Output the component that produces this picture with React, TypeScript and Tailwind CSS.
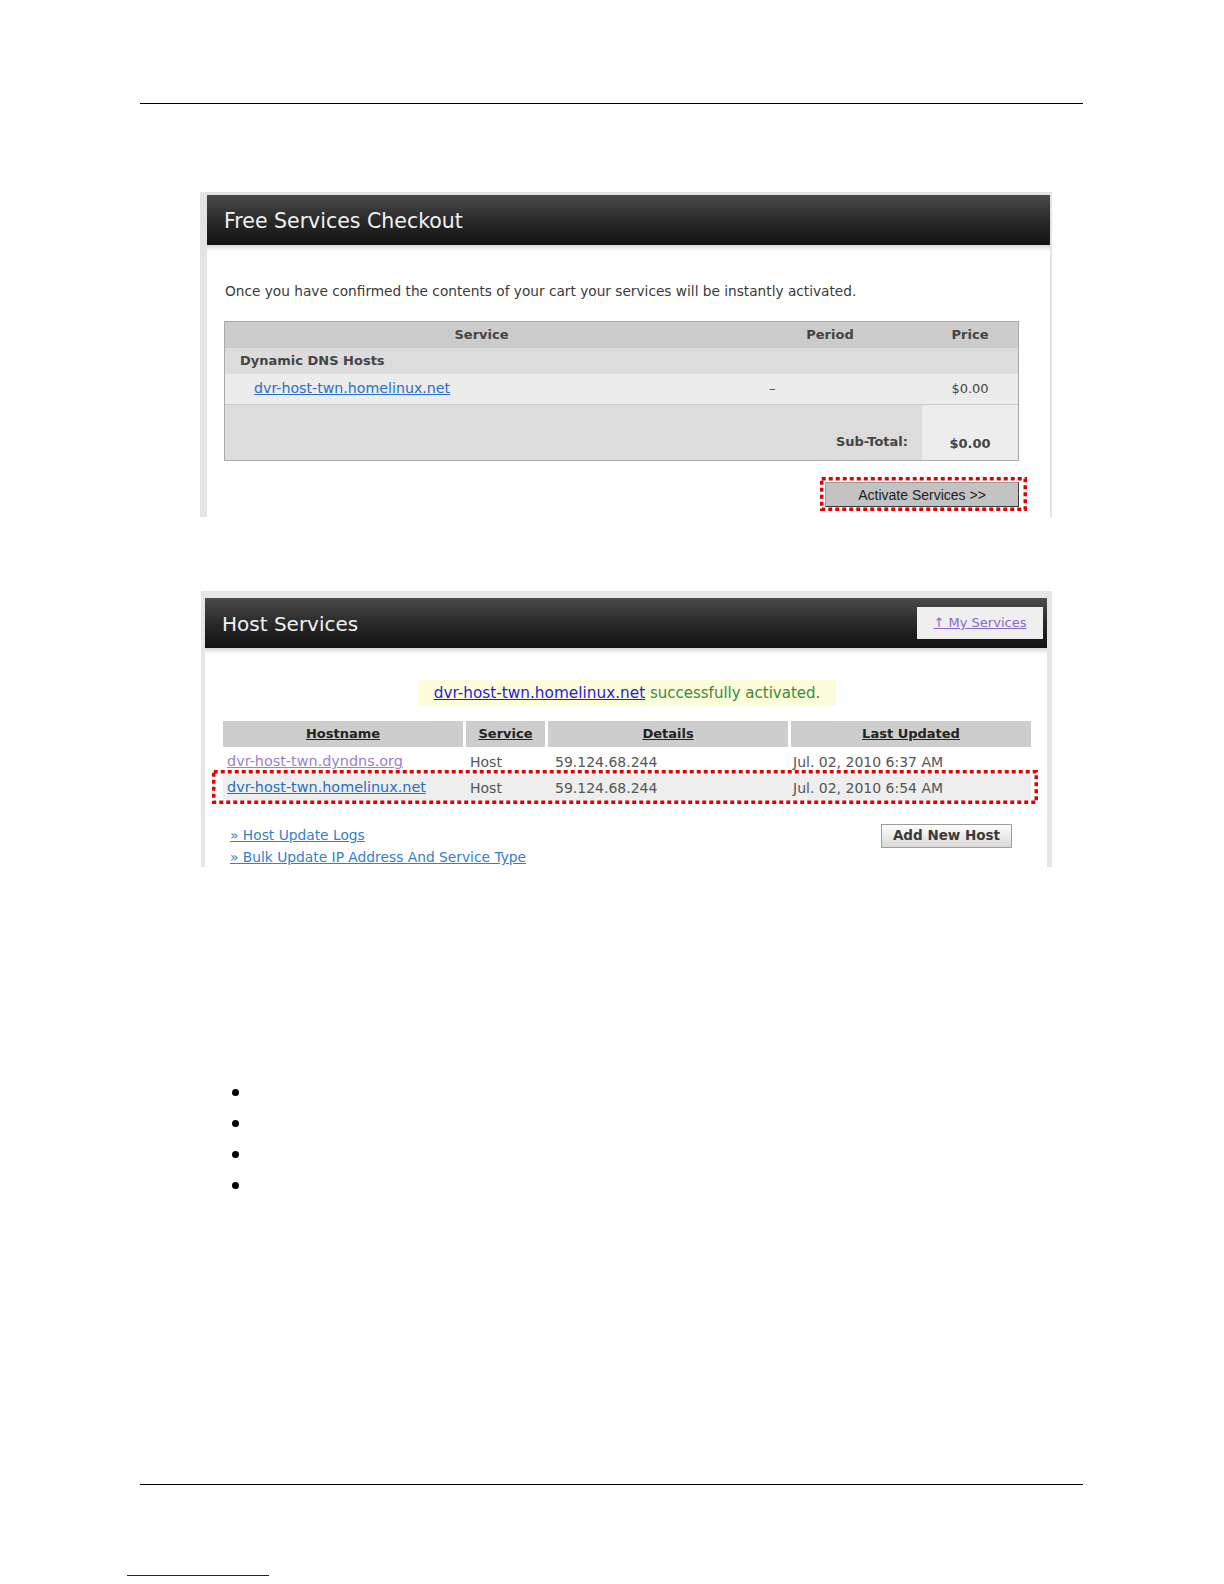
import React from 'react';

// red dotted highlight drawn over a control / row
function Dots({ w, h, className }: { w: number; h: number; className: string }) {
  return (
    <svg
      width={w}
      height={h}
      className={`absolute pointer-events-none ${className}`}
      viewBox={`0 0 ${w} ${h}`}
    >
      <rect
        x={1.75}
        y={1.75}
        width={w - 3.5}
        height={h - 3.5}
        fill="none"
        stroke="#e40000"
        strokeWidth={3.5}
        strokeDasharray="4 3"
      />
    </svg>
  );
}

function CheckoutPanel() {
  return (
    <div className="mt-[88px] ml-[200px] w-[852px] h-[325px] bg-[#e4e4e4] pt-[3px] pl-[7px] pr-[2px] flex flex-col">
      <div className="h-[50px] shrink-0 bg-gradient-to-b from-[#4b4b4b] via-[#2a2a2a] to-[#121212] pl-[17px] pt-[1px] text-[20.5px] leading-[50px] text-[#f1f1f1]">
        Free Services Checkout
      </div>
      <div className="flex-1 bg-white">
        <div className="h-[6px] bg-gradient-to-b from-[#d6d6d6] to-white" />
        <p className="mt-[30px] pl-[18px] text-[13.7px] leading-[20px] text-[#3a3a3a]">
          Once you have confirmed the contents of your cart your services will be instantly activated.
        </p>

        <div className="mt-[20px] ml-[17px] w-[795px] flex flex-col">
          <div className="border border-[#a9a9a9] text-[13px] text-[#444]">
            <div className="grid grid-cols-[513px_184px_96px] h-[26px] bg-[#cbcbcb] font-bold items-center text-center">
              <div>Service</div>
              <div>Period</div>
              <div>Price</div>
            </div>
            <div className="h-[26px] bg-[#dcdcdc] font-bold pl-[15px] flex items-center">Dynamic DNS Hosts</div>
            <div className="grid grid-cols-[513px_184px_96px] h-[31px] bg-[#ececec] items-center border-b border-[#c9c9c9]">
              <div className="pl-[29px]">
                <a className="text-[14.2px] text-[#2a6fc9] underline cursor-pointer">dvr-host-twn.homelinux.net</a>
              </div>
              <div className="pl-[31px]">–</div>
              <div className="text-center">$0.00</div>
            </div>
            <div className="grid grid-cols-[697px_96px] h-[55px] font-bold">
              <div className="bg-[#dcdcdc] flex items-end justify-end pr-[14px] pb-[9px]">Sub-Total:</div>
              <div className="bg-[#ededed] flex items-end justify-center pb-[7px]">$0.00</div>
            </div>
          </div>

          <div className="mt-[21px] ml-auto relative">
            <button className="w-[194px] h-[25px] bg-[#c3c3c3] border border-[#9a9a9a] border-r-[#383838] border-b-[#383838] font-['Liberation_Sans',Arial,sans-serif] text-[14px] text-[#222] leading-none">
              Activate Services &gt;&gt;
            </button>
            <Dots w={207} h={34} className="-left-[5px] -top-[5px]" />
          </div>
        </div>
      </div>
    </div>
  );
}

const hosts = [
  { name: 'dvr-host-twn.dyndns.org', when: 'Jul. 02, 2010 6:37 AM', visited: true },
  { name: 'dvr-host-twn.homelinux.net', when: 'Jul. 02, 2010 6:54 AM', visited: false },
];

function HostPanel() {
  return (
    <div className="mt-[74px] ml-[201px] w-[851px] h-[276px] bg-[#e6e6e6] pt-[7px] pl-[4px] pr-[5px] flex flex-col">
      <div className="h-[50px] shrink-0 bg-gradient-to-b from-[#4b4b4b] via-[#2a2a2a] to-[#121212] pl-[17px] pr-[4px] flex items-center justify-between">
        <div className="text-[20px] leading-[50px] pt-[1px] text-[#f1f1f1]">Host Services</div>
        <div className="w-[126px] h-[32px] bg-[#efefef] flex items-center justify-center">
          <a className="text-[13px] text-[#8868cc] underline cursor-pointer">↑ My Services</a>
        </div>
      </div>
      <div className="flex-1 bg-white">
        <div className="h-[6px] bg-gradient-to-b from-[#d6d6d6] to-white" />
        <div className="ml-[18px] w-[808px] flex flex-col">
          <div className="mt-[26px] mx-auto h-[26px] px-[16px] bg-[#fdfddb] text-[15px] leading-[26px]">
            <a className="text-[15.3px] text-[#1f1fd4] underline cursor-pointer">dvr-host-twn.homelinux.net</a>
            <span className="text-[#3b8a3b]"> successfully activated.</span>
          </div>

          <div className="mt-[15px] grid grid-cols-[240px_79px_240px_240px] gap-x-[3px] h-[26px] text-[13px] font-bold text-[#222]">
            {['Hostname', 'Service', 'Details', 'Last Updated'].map((h) => (
              <div key={h} className="bg-[#cdcdcd] flex items-center justify-center">
                <span className="underline">{h}</span>
              </div>
            ))}
          </div>

          <div className="mt-[2px] flex flex-col">
            {hosts.map((r, i) => (
              <div
                key={r.name}
                className={`relative grid grid-cols-[240px_79px_240px_240px] gap-x-[3px] h-[26px] items-center text-[14px] text-[#555] ${
                  i === 1 ? 'bg-[#eeeeee]' : ''
                }`}
              >
                <div className="pl-[4px]">
                  <a className={`text-[14.4px] underline cursor-pointer ${r.visited ? 'text-[#9a7fd2]' : 'text-[#2270cc]'}`}>
                    {r.name}
                  </a>
                </div>
                <div className="pl-[4px]">Host</div>
                <div className="pl-[7px]">59.124.68.244</div>
                <div className="pl-[2px]">{r.when}</div>
                {i === 1 && <Dots w={826} h={34} className="-left-[11px] -top-[5px]" />}
              </div>
            ))}
          </div>

          <div className="mt-[23px] flex justify-between">
            <div className="pl-[7px] flex flex-col text-[13.8px] leading-[22px] text-[#2f7fd2]">
              <a className="underline cursor-pointer">» Host Update Logs</a>
              <a className="underline cursor-pointer">» Bulk Update IP Address And Service Type</a>
            </div>
            <button className="mr-[19px] w-[131px] h-[24px] bg-gradient-to-b from-white to-[#d8d8d8] border border-[#9d9d9d] text-[13.5px] font-bold text-[#3a3a3a] leading-none">
              Add New Host
            </button>
          </div>
        </div>
      </div>
    </div>
  );
}

export default function App() {
  return (
    <div className="w-[1224px] h-[1584px] bg-white flex flex-col font-['DejaVu_Sans',sans-serif]">
      <div className="mt-[103px] ml-[140px] w-[943px] h-px bg-black" />

      <CheckoutPanel />
      <HostPanel />

      <ul className="mt-[210px] ml-[232px] flex flex-col">
        {[0, 1, 2, 3].map((i) => (
          <li key={i} className="h-[31px] flex items-center">
            <span className="w-[7px] h-[7px] rounded-full bg-black" />
          </li>
        ))}
      </ul>

      <div className="mt-[283px] ml-[140px] w-[943px] h-px bg-black" />
      <div className="mt-[90px] ml-[127px] w-[142px] h-px bg-[#1a1a8a]" />
    </div>
  );
}
